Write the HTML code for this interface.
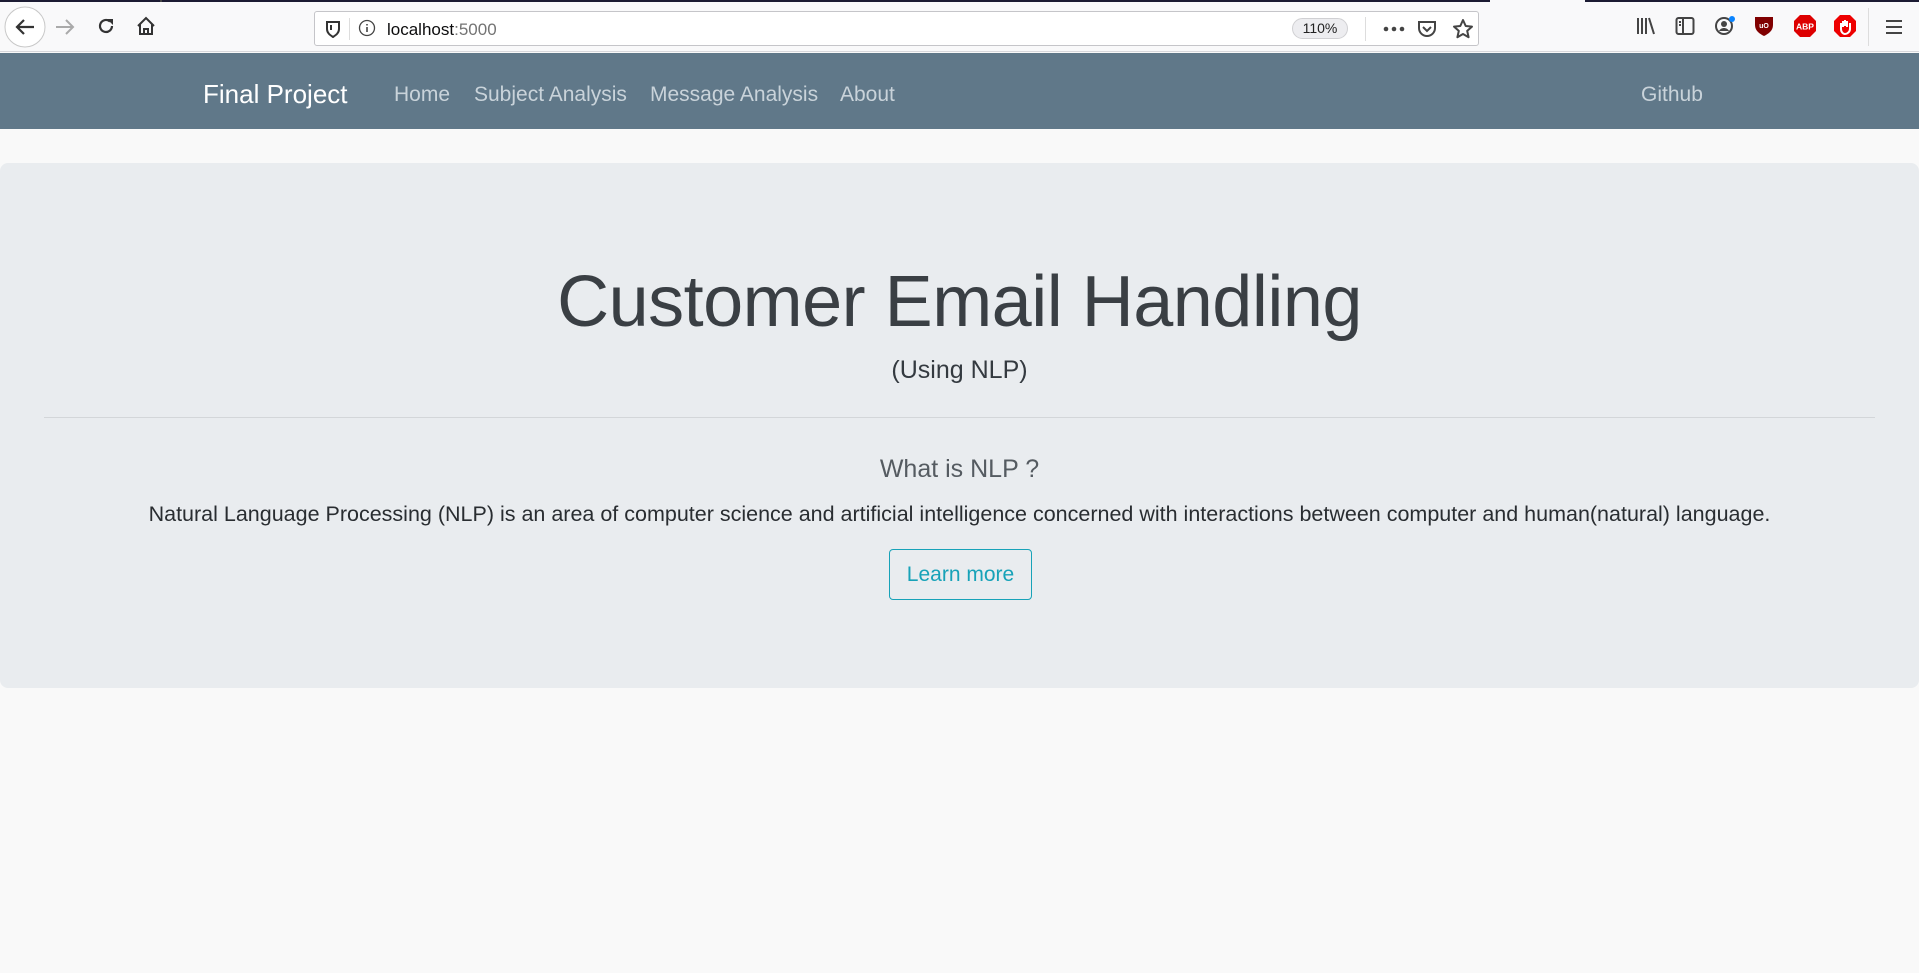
<!DOCTYPE html>
<html><head><meta charset="utf-8"><style>
*{margin:0;padding:0;box-sizing:border-box}
html,body{width:1919px;height:973px;overflow:hidden;background:#f9f9f9;font-family:"Liberation Sans",sans-serif}
.tabs{position:absolute;left:0;top:0;width:1919px;height:2px;background:#1c1b33}
.tabs i{position:absolute;top:0;height:2px;background:#f9f9fa}
.tb{position:absolute;left:0;top:2px;width:1919px;height:50px;background:#f9f9fa;border-bottom:1px solid #d7d7db}
.url{position:absolute;left:314px;top:9px;width:1165px;height:35px;background:#fff;border:1px solid #c5c5c9;border-radius:3px}
.url .t{position:absolute;left:72px;top:8px;font-size:17px;color:#0c0c0d}
.url .t span{color:#737373}
.zoom{position:absolute;left:977px;top:6px;width:56px;height:21px;border:1px solid #d0d0d3;border-radius:11px;background:#ededf0;font-size:14px;text-align:center;line-height:19px;color:#222}
.nav{position:absolute;left:0;top:53px;width:1919px;height:76px;background:#607889}
.nav a{position:absolute;top:30px;font-size:21px;color:#c9d3da;white-space:nowrap}
.jum{position:absolute;left:0;top:163px;width:1919px;height:525px;background:#e9ecef;border-radius:8px}
.c{position:absolute;left:0;width:1919px;text-align:center;white-space:nowrap}
h1{font-weight:300;font-size:72px;color:#3a3f44;letter-spacing:-0.5px}
.btn{position:absolute;left:889px;top:549px;width:143px;height:51px;border:1px solid #17a2b8;border-radius:4px;color:#17a2b8;font-size:21px;text-align:center;line-height:49px}
svg{position:absolute}
</style></head><body>
<div class="tabs"><i style="left:160px;width:2px;background:#444"></i><i style="left:1490px;width:95px"></i></div>
<div class="tb">
<svg style="left:4px;top:4px" width="42" height="42" viewBox="0 0 42 42"><circle cx="21" cy="21" r="20" fill="#fff" stroke="#c8c8c8"/><path d="M30 21H13M20 14l-7 7 7 7" stroke="#333" stroke-width="2.2" fill="none"/></svg>
<svg style="left:54px;top:15px" width="22" height="20" viewBox="0 0 22 20"><path d="M2 10h17M12 3l7 7-7 7" stroke="#aaa" stroke-width="2" fill="none"/></svg>
<svg style="left:96px;top:14px" width="20" height="20" viewBox="0 0 20 20"><path d="M16 10a6 6 0 1 1-2-4.5" stroke="#333" stroke-width="2.2" fill="none"/><path d="M11 3h6v6z" fill="#333"/></svg>
<svg style="left:135px;top:13px" width="22" height="22" viewBox="0 0 22 22"><path d="M3 11l8-8 8 8M5 9v10h12V9M9 19v-5h4v5" stroke="#333" stroke-width="2" fill="none"/></svg>
<div class="url">
<svg style="left:10px;top:8px" width="16" height="18" viewBox="0 0 16 18"><path d="M2 2h12v7c0 4-3 6-6 8-3-2-6-4-6-8z" stroke="#333" stroke-width="2" fill="none"/><path d="M6 5v5" stroke="#333" stroke-width="2"/></svg>
<div style="position:absolute;left:34px;top:6px;width:1px;height:22px;background:#ddd"></div>
<svg style="left:43px;top:7px" width="18" height="18" viewBox="0 0 18 18"><circle cx="9" cy="9" r="7.5" stroke="#444" fill="none" stroke-width="1.3"/><path d="M9 8v5M9 5v1.5" stroke="#444" stroke-width="1.6"/></svg>
<div class="t">localhost<span>:5000</span></div>
<div class="zoom">110%</div>
<div style="position:absolute;left:1050px;top:5px;width:1px;height:24px;background:#ddd"></div>
<svg style="left:1068px;top:14px" width="22" height="6"><circle cx="3" cy="3" r="2.3" fill="#444"/><circle cx="11" cy="3" r="2.3" fill="#444"/><circle cx="19" cy="3" r="2.3" fill="#444"/></svg>
<svg style="left:1102px;top:7px" width="20" height="20" viewBox="0 0 20 20"><path d="M2 3h16v6a8 8 0 0 1-16 0z" stroke="#444" stroke-width="2" fill="none"/><path d="M6 8l4 4 4-4" stroke="#444" stroke-width="2" fill="none"/></svg>
<svg style="left:1137px;top:6px" width="22" height="22" viewBox="0 0 22 22"><path d="M11 2l2.7 6 6.3.6-4.8 4.3 1.4 6.3L11 16l-5.6 3.2 1.4-6.3L2 8.6 8.3 8z" stroke="#444" stroke-width="2" fill="none" stroke-linejoin="round"/></svg>
</div>
<svg style="left:1636px;top:14px" width="20" height="20" viewBox="0 0 20 20"><path d="M2 2v16M6 2v16M10 2v16M13 2l5 16" stroke="#444" stroke-width="2" fill="none"/></svg>
<svg style="left:1675px;top:14px" width="20" height="20" viewBox="0 0 20 20"><rect x="1.5" y="2" width="17" height="16" rx="2" stroke="#444" stroke-width="2" fill="none"/><path d="M8 2v16M4 6h2M4 9h2" stroke="#444" stroke-width="2"/></svg>
<svg style="left:1714px;top:12px" width="24" height="24" viewBox="0 0 24 24"><circle cx="10" cy="12" r="8" stroke="#444" stroke-width="2" fill="none"/><circle cx="10" cy="10" r="3" fill="#444"/><path d="M5 17c2-4 8-4 10 0" fill="#444"/><circle cx="18" cy="5" r="3" fill="#0a84ff"/></svg>
<svg style="left:1754px;top:13px" width="20" height="22" viewBox="0 0 20 22"><path d="M1 2h18v8c0 6-5 9-9 11-4-2-9-5-9-11z" fill="#800000"/><text x="10" y="13" font-size="7" fill="#fff" text-anchor="middle" font-family="Liberation Sans" font-weight="bold">uO</text></svg>
<svg style="left:1793px;top:12px" width="24" height="24" viewBox="0 0 24 24"><path d="M7 1h10l6 6v10l-6 6H7l-6-6V7z" fill="#d00"/><text x="12" y="15.5" font-size="8.5" fill="#fff" text-anchor="middle" font-family="Liberation Sans" font-weight="bold">ABP</text></svg>
<svg style="left:1833px;top:12px" width="24" height="24" viewBox="0 0 24 24"><path d="M7 1h10l6 6v10l-6 6H7l-6-6V7z" fill="#e00"/><path d="M8 9v6c0 3 2 5 4 5s5-2 5-5V9M10 7v6M12 6v6M14 7v6" stroke="#fff" stroke-width="2" fill="none"/></svg>
<div style="position:absolute;left:1868px;top:6px;width:1px;height:38px;background:#ddd"></div>
<svg style="left:1885px;top:16px" width="18" height="18"><path d="M1 3h16M1 9h16M1 15h16" stroke="#444" stroke-width="2"/></svg>
</div>
<div class="nav">
<a style="left:203px;top:26px;font-size:26px;color:#fff">Final Project</a>
<a style="left:394px">Home</a>
<a style="left:474px">Subject Analysis</a>
<a style="left:650px">Message Analysis</a>
<a style="left:840px">About</a>
<a style="left:1641px">Github</a>
</div>
<div class="jum"></div>
<h1 class="c" style="top:261px">Customer Email Handling</h1>
<div class="c" style="top:356px;font-size:25px;color:#343a40">(Using NLP)</div>
<div style="position:absolute;left:44px;top:417px;width:1831px;height:1px;background:#d3d6d9"></div>
<div class="c" style="top:455px;font-size:25px;font-weight:300;color:#555b61">What is NLP ?</div>
<div class="c" style="top:502px;font-size:21.5px;color:#292d31">Natural Language Processing (NLP) is an area of computer science and artificial intelligence concerned with interactions between computer and human(natural) language.</div>
<div class="btn">Learn more</div>
</body></html>
